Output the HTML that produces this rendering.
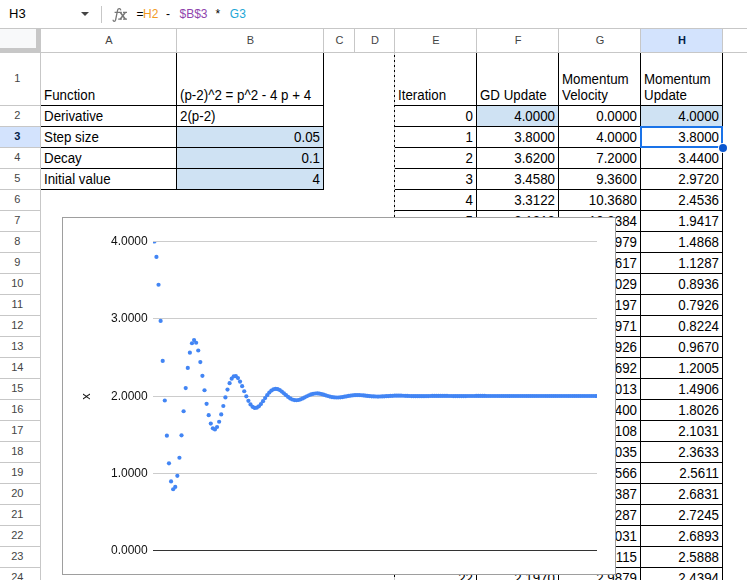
<!DOCTYPE html>
<html><head><meta charset="utf-8"><style>
html,body{margin:0;padding:0;background:#fff;}
body{width:747px;height:580px;position:relative;overflow:hidden;font-family:"Liberation Sans", sans-serif;}
.t{position:absolute;font-size:13.33px;line-height:15px;white-space:nowrap;color:#000;transform:scaleY(1.06);transform-origin:0 12px;}
.hd{position:absolute;font-size:11px;line-height:13px;text-align:center;color:#444;white-space:nowrap;}
</style></head><body>
<div style="position:absolute;left:177px;top:127px;width:146px;height:20px;background:#cfe2f3"></div><div style="position:absolute;left:177px;top:148px;width:146px;height:20px;background:#cfe2f3"></div><div style="position:absolute;left:177px;top:169px;width:146px;height:20px;background:#cfe2f3"></div><div style="position:absolute;left:477px;top:106px;width:81px;height:20px;background:#cfe2f3"></div><div style="position:absolute;left:641px;top:106px;width:81px;height:20px;background:#cfe2f3"></div><div class="t" style="left:44px;top:88px;">Function</div><div class="t" style="left:180px;top:88px;">(p-2)^2 = p^2 - 4 p + 4</div><div class="t" style="left:44px;top:109px;">Derivative</div><div class="t" style="left:180px;top:109px;">2(p-2)</div><div class="t" style="left:44px;top:130px;">Step size</div><div class="t" style="right:427px;top:130px;text-align:right;">0.05</div><div class="t" style="left:44px;top:151px;">Decay</div><div class="t" style="right:427px;top:151px;text-align:right;">0.1</div><div class="t" style="left:44px;top:172px;">Initial value</div><div class="t" style="right:427px;top:172px;text-align:right;">4</div><div class="t" style="left:398px;top:88px;">Iteration</div><div class="t" style="left:480px;top:88px;">GD Update</div><div class="t" style="left:562px;top:72px;">Momentum</div><div class="t" style="left:562px;top:88px;">Velocity</div><div class="t" style="left:644px;top:72px;">Momentum</div><div class="t" style="left:644px;top:88px;">Update</div><div class="t" style="right:274px;top:109px;text-align:right;">0</div><div class="t" style="right:192px;top:109px;text-align:right;">4.0000</div><div class="t" style="right:110px;top:109px;text-align:right;">0.0000</div><div class="t" style="right:28px;top:109px;text-align:right;">4.0000</div><div class="t" style="right:274px;top:130px;text-align:right;">1</div><div class="t" style="right:192px;top:130px;text-align:right;">3.8000</div><div class="t" style="right:110px;top:130px;text-align:right;">4.0000</div><div class="t" style="right:28px;top:130px;text-align:right;">3.8000</div><div class="t" style="right:274px;top:151px;text-align:right;">2</div><div class="t" style="right:192px;top:151px;text-align:right;">3.6200</div><div class="t" style="right:110px;top:151px;text-align:right;">7.2000</div><div class="t" style="right:28px;top:151px;text-align:right;">3.4400</div><div class="t" style="right:274px;top:172px;text-align:right;">3</div><div class="t" style="right:192px;top:172px;text-align:right;">3.4580</div><div class="t" style="right:110px;top:172px;text-align:right;">9.3600</div><div class="t" style="right:28px;top:172px;text-align:right;">2.9720</div><div class="t" style="right:274px;top:193px;text-align:right;">4</div><div class="t" style="right:192px;top:193px;text-align:right;">3.3122</div><div class="t" style="right:110px;top:193px;text-align:right;">10.3680</div><div class="t" style="right:28px;top:193px;text-align:right;">2.4536</div><div class="t" style="right:274px;top:214px;text-align:right;">5</div><div class="t" style="right:192px;top:214px;text-align:right;">3.1810</div><div class="t" style="right:110px;top:214px;text-align:right;">10.2384</div><div class="t" style="right:28px;top:214px;text-align:right;">1.9417</div><div class="t" style="right:274px;top:235px;text-align:right;">6</div><div class="t" style="right:192px;top:235px;text-align:right;">3.0629</div><div class="t" style="right:110px;top:235px;text-align:right;">9.0979</div><div class="t" style="right:28px;top:235px;text-align:right;">1.4868</div><div class="t" style="right:274px;top:256px;text-align:right;">7</div><div class="t" style="right:192px;top:256px;text-align:right;">2.9566</div><div class="t" style="right:110px;top:256px;text-align:right;">7.1617</div><div class="t" style="right:28px;top:256px;text-align:right;">1.1287</div><div class="t" style="right:274px;top:277px;text-align:right;">8</div><div class="t" style="right:192px;top:277px;text-align:right;">2.8609</div><div class="t" style="right:110px;top:277px;text-align:right;">4.7029</div><div class="t" style="right:28px;top:277px;text-align:right;">0.8936</div><div class="t" style="right:274px;top:298px;text-align:right;">9</div><div class="t" style="right:192px;top:298px;text-align:right;">2.7748</div><div class="t" style="right:110px;top:298px;text-align:right;">2.0197</div><div class="t" style="right:28px;top:298px;text-align:right;">0.7926</div><div class="t" style="right:274px;top:319px;text-align:right;">10</div><div class="t" style="right:192px;top:319px;text-align:right;">2.6974</div><div class="t" style="right:110px;top:319px;text-align:right;">-0.5971</div><div class="t" style="right:28px;top:319px;text-align:right;">0.8224</div><div class="t" style="right:274px;top:340px;text-align:right;">11</div><div class="t" style="right:192px;top:340px;text-align:right;">2.6276</div><div class="t" style="right:110px;top:340px;text-align:right;">-2.8926</div><div class="t" style="right:28px;top:340px;text-align:right;">0.9670</div><div class="t" style="right:274px;top:361px;text-align:right;">12</div><div class="t" style="right:192px;top:361px;text-align:right;">2.5649</div><div class="t" style="right:110px;top:361px;text-align:right;">-4.6692</div><div class="t" style="right:28px;top:361px;text-align:right;">1.2005</div><div class="t" style="right:274px;top:382px;text-align:right;">13</div><div class="t" style="right:192px;top:382px;text-align:right;">2.5084</div><div class="t" style="right:110px;top:382px;text-align:right;">-5.8013</div><div class="t" style="right:28px;top:382px;text-align:right;">1.4906</div><div class="t" style="right:274px;top:403px;text-align:right;">14</div><div class="t" style="right:192px;top:403px;text-align:right;">2.4575</div><div class="t" style="right:110px;top:403px;text-align:right;">-6.2400</div><div class="t" style="right:28px;top:403px;text-align:right;">1.8026</div><div class="t" style="right:274px;top:424px;text-align:right;">15</div><div class="t" style="right:192px;top:424px;text-align:right;">2.4118</div><div class="t" style="right:110px;top:424px;text-align:right;">-6.0108</div><div class="t" style="right:28px;top:424px;text-align:right;">2.1031</div><div class="t" style="right:274px;top:445px;text-align:right;">16</div><div class="t" style="right:192px;top:445px;text-align:right;">2.3706</div><div class="t" style="right:110px;top:445px;text-align:right;">-5.2035</div><div class="t" style="right:28px;top:445px;text-align:right;">2.3633</div><div class="t" style="right:274px;top:466px;text-align:right;">17</div><div class="t" style="right:192px;top:466px;text-align:right;">2.3335</div><div class="t" style="right:110px;top:466px;text-align:right;">-3.9566</div><div class="t" style="right:28px;top:466px;text-align:right;">2.5611</div><div class="t" style="right:274px;top:487px;text-align:right;">18</div><div class="t" style="right:192px;top:487px;text-align:right;">2.3002</div><div class="t" style="right:110px;top:487px;text-align:right;">-2.4387</div><div class="t" style="right:28px;top:487px;text-align:right;">2.6831</div><div class="t" style="right:274px;top:508px;text-align:right;">19</div><div class="t" style="right:192px;top:508px;text-align:right;">2.2702</div><div class="t" style="right:110px;top:508px;text-align:right;">-0.8287</div><div class="t" style="right:28px;top:508px;text-align:right;">2.7245</div><div class="t" style="right:274px;top:529px;text-align:right;">20</div><div class="t" style="right:192px;top:529px;text-align:right;">2.2432</div><div class="t" style="right:110px;top:529px;text-align:right;">0.7031</div><div class="t" style="right:28px;top:529px;text-align:right;">2.6893</div><div class="t" style="right:274px;top:550px;text-align:right;">21</div><div class="t" style="right:192px;top:550px;text-align:right;">2.2188</div><div class="t" style="right:110px;top:550px;text-align:right;">2.0115</div><div class="t" style="right:28px;top:550px;text-align:right;">2.5888</div><div class="t" style="right:274px;top:571px;text-align:right;">22</div><div class="t" style="right:192px;top:571px;text-align:right;">2.1970</div><div class="t" style="right:110px;top:571px;text-align:right;">2.9879</div><div class="t" style="right:28px;top:571px;text-align:right;">2.4394</div><div class="t" style="right:274px;top:592px;text-align:right;">23</div><div class="t" style="right:192px;top:592px;text-align:right;">2.1773</div><div class="t" style="right:110px;top:592px;text-align:right;">3.5678</div><div class="t" style="right:28px;top:592px;text-align:right;">2.2610</div><div style="position:absolute;left:41px;top:105px;width:283px;height:1px;background:#000"></div><div style="position:absolute;left:41px;top:126px;width:283px;height:1px;background:#000"></div><div style="position:absolute;left:41px;top:147px;width:283px;height:1px;background:#000"></div><div style="position:absolute;left:41px;top:168px;width:283px;height:1px;background:#000"></div><div style="position:absolute;left:41px;top:189px;width:283px;height:1px;background:#000"></div><div style="position:absolute;left:176px;top:53px;width:1px;height:137px;background:#000"></div><div style="position:absolute;left:323px;top:53px;width:1px;height:137px;background:#000"></div><div style="position:absolute;left:394px;top:105px;width:329px;height:1px;background:#000"></div><div style="position:absolute;left:394px;top:126px;width:329px;height:1px;background:#000"></div><div style="position:absolute;left:394px;top:147px;width:329px;height:1px;background:#000"></div><div style="position:absolute;left:394px;top:168px;width:329px;height:1px;background:#000"></div><div style="position:absolute;left:394px;top:189px;width:329px;height:1px;background:#000"></div><div style="position:absolute;left:394px;top:210px;width:329px;height:1px;background:#000"></div><div style="position:absolute;left:394px;top:231px;width:329px;height:1px;background:#000"></div><div style="position:absolute;left:394px;top:252px;width:329px;height:1px;background:#000"></div><div style="position:absolute;left:394px;top:273px;width:329px;height:1px;background:#000"></div><div style="position:absolute;left:394px;top:294px;width:329px;height:1px;background:#000"></div><div style="position:absolute;left:394px;top:315px;width:329px;height:1px;background:#000"></div><div style="position:absolute;left:394px;top:336px;width:329px;height:1px;background:#000"></div><div style="position:absolute;left:394px;top:357px;width:329px;height:1px;background:#000"></div><div style="position:absolute;left:394px;top:378px;width:329px;height:1px;background:#000"></div><div style="position:absolute;left:394px;top:399px;width:329px;height:1px;background:#000"></div><div style="position:absolute;left:394px;top:420px;width:329px;height:1px;background:#000"></div><div style="position:absolute;left:394px;top:441px;width:329px;height:1px;background:#000"></div><div style="position:absolute;left:394px;top:462px;width:329px;height:1px;background:#000"></div><div style="position:absolute;left:394px;top:483px;width:329px;height:1px;background:#000"></div><div style="position:absolute;left:394px;top:504px;width:329px;height:1px;background:#000"></div><div style="position:absolute;left:394px;top:525px;width:329px;height:1px;background:#000"></div><div style="position:absolute;left:394px;top:546px;width:329px;height:1px;background:#000"></div><div style="position:absolute;left:394px;top:567px;width:329px;height:1px;background:#000"></div><div style="position:absolute;left:394px;top:588px;width:329px;height:1px;background:#000"></div><div style="position:absolute;left:394px;top:609px;width:329px;height:1px;background:#000"></div><div style="position:absolute;left:394px;top:630px;width:329px;height:1px;background:#000"></div><div style="position:absolute;left:394px;top:651px;width:329px;height:1px;background:#000"></div><div style="position:absolute;left:394px;top:672px;width:329px;height:1px;background:#000"></div><div style="position:absolute;left:476px;top:53px;width:1px;height:527px;background:#000"></div><div style="position:absolute;left:558px;top:53px;width:1px;height:527px;background:#000"></div><div style="position:absolute;left:640px;top:53px;width:1px;height:527px;background:#000"></div><div style="position:absolute;left:722px;top:53px;width:1px;height:527px;background:#000"></div><div style="position:absolute;left:394px;top:53px;width:1px;height:527px;background:repeating-linear-gradient(to bottom,#ccc 0,#ccc 2px,#000 2px,#000 4px,#ccc 4px,#ccc 5px)"></div><div style="position:absolute;left:640px;top:126px;width:79px;height:18px;border:2px solid #1a73e8"></div><div style="position:absolute;left:719px;top:144px;width:8px;height:8px;border-radius:50%;background:#0b57d0;box-shadow:0 0 0 1px #fff"></div>
<div style="position:absolute;left:0;top:28px;width:747px;height:1px;background:#c7c7c7"></div><div style="position:absolute;left:0;top:52px;width:747px;height:1px;background:#c7c7c7"></div><div style="position:absolute;left:641px;top:29px;width:81px;height:23px;background:#d3e3fd"></div><div style="position:absolute;left:0;top:29px;width:36px;height:19px;background:#f8f9fa"></div><div style="position:absolute;left:36px;top:29px;width:4px;height:23px;background:#c7c7c7"></div><div style="position:absolute;left:0;top:48px;width:40px;height:4px;background:#c7c7c7"></div><div style="position:absolute;left:40px;top:29px;width:1px;height:23px;background:#c7c7c7"></div><div style="position:absolute;left:176px;top:29px;width:1px;height:23px;background:#c7c7c7"></div><div style="position:absolute;left:323px;top:29px;width:1px;height:23px;background:#c7c7c7"></div><div style="position:absolute;left:354px;top:29px;width:1px;height:23px;background:#c7c7c7"></div><div style="position:absolute;left:394px;top:29px;width:1px;height:23px;background:#c7c7c7"></div><div style="position:absolute;left:476px;top:29px;width:1px;height:23px;background:#c7c7c7"></div><div style="position:absolute;left:558px;top:29px;width:1px;height:23px;background:#c7c7c7"></div><div style="position:absolute;left:640px;top:29px;width:1px;height:23px;background:#c7c7c7"></div><div style="position:absolute;left:722px;top:29px;width:1px;height:23px;background:#c7c7c7"></div><div style="position:absolute;left:40px;top:53px;width:1px;height:527px;background:#c7c7c7"></div><div class="hd" style="left:79.0px;top:34px;width:60px;">A</div><div class="hd" style="left:220.5px;top:34px;width:60px;">B</div><div class="hd" style="left:309.5px;top:34px;width:60px;">C</div><div class="hd" style="left:345.0px;top:34px;width:60px;">D</div><div class="hd" style="left:406.0px;top:34px;width:60px;">E</div><div class="hd" style="left:488.0px;top:34px;width:60px;">F</div><div class="hd" style="left:570.0px;top:34px;width:60px;">G</div><div class="hd" style="left:652.0px;top:34px;width:60px;font-weight:bold;color:#041e49;">H</div><div style="position:absolute;left:0;top:105px;width:40px;height:1px;background:#c7c7c7"></div><div style="position:absolute;left:0;top:126px;width:40px;height:1px;background:#c7c7c7"></div><div style="position:absolute;left:0;top:147px;width:40px;height:1px;background:#c7c7c7"></div><div style="position:absolute;left:0;top:168px;width:40px;height:1px;background:#c7c7c7"></div><div style="position:absolute;left:0;top:189px;width:40px;height:1px;background:#c7c7c7"></div><div style="position:absolute;left:0;top:210px;width:40px;height:1px;background:#c7c7c7"></div><div style="position:absolute;left:0;top:231px;width:40px;height:1px;background:#c7c7c7"></div><div style="position:absolute;left:0;top:252px;width:40px;height:1px;background:#c7c7c7"></div><div style="position:absolute;left:0;top:273px;width:40px;height:1px;background:#c7c7c7"></div><div style="position:absolute;left:0;top:294px;width:40px;height:1px;background:#c7c7c7"></div><div style="position:absolute;left:0;top:315px;width:40px;height:1px;background:#c7c7c7"></div><div style="position:absolute;left:0;top:336px;width:40px;height:1px;background:#c7c7c7"></div><div style="position:absolute;left:0;top:357px;width:40px;height:1px;background:#c7c7c7"></div><div style="position:absolute;left:0;top:378px;width:40px;height:1px;background:#c7c7c7"></div><div style="position:absolute;left:0;top:399px;width:40px;height:1px;background:#c7c7c7"></div><div style="position:absolute;left:0;top:420px;width:40px;height:1px;background:#c7c7c7"></div><div style="position:absolute;left:0;top:441px;width:40px;height:1px;background:#c7c7c7"></div><div style="position:absolute;left:0;top:462px;width:40px;height:1px;background:#c7c7c7"></div><div style="position:absolute;left:0;top:483px;width:40px;height:1px;background:#c7c7c7"></div><div style="position:absolute;left:0;top:504px;width:40px;height:1px;background:#c7c7c7"></div><div style="position:absolute;left:0;top:525px;width:40px;height:1px;background:#c7c7c7"></div><div style="position:absolute;left:0;top:546px;width:40px;height:1px;background:#c7c7c7"></div><div style="position:absolute;left:0;top:567px;width:40px;height:1px;background:#c7c7c7"></div><div style="position:absolute;left:0;top:588px;width:40px;height:1px;background:#c7c7c7"></div><div style="position:absolute;left:0;top:609px;width:40px;height:1px;background:#c7c7c7"></div><div class="hd" style="left:-2.7px;top:72.0px;width:40px;">1</div><div class="hd" style="left:-2.7px;top:109.0px;width:40px;">2</div><div style="position:absolute;left:0;top:127px;width:40px;height:20px;background:#d3e3fd"></div><div class="hd" style="left:-2.7px;top:130.0px;width:40px;font-weight:bold;color:#041e49;">3</div><div class="hd" style="left:-2.7px;top:151.0px;width:40px;">4</div><div class="hd" style="left:-2.7px;top:172.0px;width:40px;">5</div><div class="hd" style="left:-2.7px;top:193.0px;width:40px;">6</div><div class="hd" style="left:-2.7px;top:214.0px;width:40px;">7</div><div class="hd" style="left:-2.7px;top:235.0px;width:40px;">8</div><div class="hd" style="left:-2.7px;top:256.0px;width:40px;">9</div><div class="hd" style="left:-2.7px;top:277.0px;width:40px;">10</div><div class="hd" style="left:-2.7px;top:298.0px;width:40px;">11</div><div class="hd" style="left:-2.7px;top:319.0px;width:40px;">12</div><div class="hd" style="left:-2.7px;top:340.0px;width:40px;">13</div><div class="hd" style="left:-2.7px;top:361.0px;width:40px;">14</div><div class="hd" style="left:-2.7px;top:382.0px;width:40px;">15</div><div class="hd" style="left:-2.7px;top:403.0px;width:40px;">16</div><div class="hd" style="left:-2.7px;top:424.0px;width:40px;">17</div><div class="hd" style="left:-2.7px;top:445.0px;width:40px;">18</div><div class="hd" style="left:-2.7px;top:466.0px;width:40px;">19</div><div class="hd" style="left:-2.7px;top:487.0px;width:40px;">20</div><div class="hd" style="left:-2.7px;top:508.0px;width:40px;">21</div><div class="hd" style="left:-2.7px;top:529.0px;width:40px;">22</div><div class="hd" style="left:-2.7px;top:550.0px;width:40px;">23</div><div class="hd" style="left:-2.7px;top:571.0px;width:40px;">24</div><div class="hd" style="left:-2.7px;top:592.0px;width:40px;">25</div>
<div class="t" style="left:9px;top:6px;font-size:13px;transform:none">H3</div><div style="position:absolute;left:81px;top:12px;width:0;height:0;border-left:4px solid transparent;border-right:4px solid transparent;border-top:4px solid #444"></div><div style="position:absolute;left:101px;top:6px;width:1px;height:17px;background:#c7c7c7"></div><svg width="747" height="28" style="position:absolute;left:0;top:0"><g fill="none" stroke="#777" stroke-width="1.3" stroke-linecap="butt"><path d="M120.6 10.4 C120.9 8.4 118.1 8.0 117.6 10.2 L115.6 19.8 C115.2 21.8 113.0 21.8 113.1 19.8"/><path d="M114.6 12.45 H121.8 M123 12.45 H127 M118.2 19.2 H121.8 M123 19.2 H127"/><path d="M120.4 12.45 L125.4 19.2 M125.2 12.45 L120.2 19.2" stroke-width="1.5"/></g></svg><div class="t" style="left:136.5px;top:7px;font-size:12px;color:#000">=</div><div class="t" style="left:143px;top:7px;font-size:12px;color:#f29a1f">H2</div><div class="t" style="left:166px;top:7px;font-size:12px;color:#000">-</div><div class="t" style="left:179.5px;top:7px;font-size:12px;color:#8e44ad">$B$3</div><div class="t" style="left:215.5px;top:7px;font-size:12px;color:#000">*</div><div class="t" style="left:229.8px;top:7px;font-size:12px;color:#1ea7d6">G3</div>
<svg width="747" height="580" style="position:absolute;left:0;top:0;will-change:transform"><rect x="62.5" y="217.5" width="553" height="357" fill="#fff" stroke="#9e9e9e" stroke-width="1"/><defs><clipPath id="cp"><rect x="153" y="242" width="444" height="309"/></clipPath></defs><line x1="153" x2="597" y1="241.50" y2="241.50" stroke="#cccccc" stroke-width="1"/><line x1="153" x2="597" y1="318.50" y2="318.50" stroke="#cccccc" stroke-width="1"/><line x1="153" x2="597" y1="396.50" y2="396.50" stroke="#cccccc" stroke-width="1"/><line x1="153" x2="597" y1="473.50" y2="473.50" stroke="#cccccc" stroke-width="1"/><line x1="153" x2="597" y1="550.50" y2="550.50" stroke="#333" stroke-width="1"/><g font-family="Liberation Sans, sans-serif" font-size="12" fill="#111"><text x="147.7" y="245.30" text-anchor="end">4.0000</text><text x="147.7" y="322.30" text-anchor="end">3.0000</text><text x="147.7" y="400.30" text-anchor="end">2.0000</text><text x="147.7" y="477.30" text-anchor="end">1.0000</text><text x="147.7" y="554.30" text-anchor="end">0.0000</text><text x="0" y="0" font-size="13" transform="translate(90.3 396.5) rotate(-90)" text-anchor="middle">x</text></g><g clip-path="url(#cp)" fill="#4285f4"><circle cx="154.35" cy="241.50" r="2.1"/><circle cx="156.44" cy="256.95" r="2.1"/><circle cx="158.53" cy="284.76" r="2.1"/><circle cx="160.62" cy="320.91" r="2.1"/><circle cx="162.71" cy="360.96" r="2.1"/><circle cx="164.80" cy="400.51" r="2.1"/><circle cx="166.89" cy="435.65" r="2.1"/><circle cx="168.98" cy="463.31" r="2.1"/><circle cx="171.07" cy="481.47" r="2.1"/><circle cx="173.16" cy="489.27" r="2.1"/><circle cx="175.25" cy="486.97" r="2.1"/><circle cx="177.34" cy="475.80" r="2.1"/><circle cx="179.43" cy="457.76" r="2.1"/><circle cx="181.52" cy="435.35" r="2.1"/><circle cx="183.61" cy="411.25" r="2.1"/><circle cx="185.70" cy="388.03" r="2.1"/><circle cx="187.79" cy="367.94" r="2.1"/><circle cx="189.88" cy="352.65" r="2.1"/><circle cx="191.97" cy="343.23" r="2.1"/><circle cx="194.06" cy="340.03" r="2.1"/><circle cx="196.15" cy="342.75" r="2.1"/><circle cx="198.24" cy="350.52" r="2.1"/><circle cx="200.33" cy="362.06" r="2.1"/><circle cx="202.42" cy="375.84" r="2.1"/><circle cx="204.51" cy="390.26" r="2.1"/><circle cx="206.60" cy="403.81" r="2.1"/><circle cx="208.69" cy="415.22" r="2.1"/><circle cx="210.78" cy="423.58" r="2.1"/><circle cx="212.87" cy="428.33" r="2.1"/><circle cx="214.96" cy="429.38" r="2.1"/><circle cx="217.05" cy="426.99" r="2.1"/><circle cx="219.14" cy="421.74" r="2.1"/><circle cx="221.23" cy="414.43" r="2.1"/><circle cx="223.32" cy="406.02" r="2.1"/><circle cx="225.41" cy="397.44" r="2.1"/><circle cx="227.50" cy="389.58" r="2.1"/><circle cx="229.59" cy="383.15" r="2.1"/><circle cx="231.68" cy="378.64" r="2.1"/><circle cx="233.77" cy="376.32" r="2.1"/><circle cx="235.86" cy="376.20" r="2.1"/><circle cx="237.95" cy="378.08" r="2.1"/><circle cx="240.04" cy="381.55" r="2.1"/><circle cx="242.13" cy="386.13" r="2.1"/><circle cx="244.22" cy="391.23" r="2.1"/><circle cx="246.31" cy="396.30" r="2.1"/><circle cx="248.40" cy="400.84" r="2.1"/><circle cx="250.49" cy="404.43" r="2.1"/><circle cx="252.58" cy="406.83" r="2.1"/><circle cx="254.67" cy="407.90" r="2.1"/><circle cx="256.76" cy="407.67" r="2.1"/><circle cx="258.85" cy="406.30" r="2.1"/><circle cx="260.94" cy="404.04" r="2.1"/><circle cx="263.03" cy="401.20" r="2.1"/><circle cx="265.12" cy="398.12" r="2.1"/><circle cx="267.21" cy="395.14" r="2.1"/><circle cx="269.30" cy="392.54" r="2.1"/><circle cx="271.39" cy="390.55" r="2.1"/><circle cx="273.48" cy="389.30" r="2.1"/><circle cx="275.57" cy="388.85" r="2.1"/><circle cx="277.66" cy="389.16" r="2.1"/><circle cx="279.75" cy="390.12" r="2.1"/><circle cx="281.84" cy="391.57" r="2.1"/><circle cx="283.93" cy="393.32" r="2.1"/><circle cx="286.02" cy="395.16" r="2.1"/><circle cx="288.11" cy="396.91" r="2.1"/><circle cx="290.20" cy="398.38" r="2.1"/><circle cx="292.29" cy="399.48" r="2.1"/><circle cx="294.38" cy="400.11" r="2.1"/><circle cx="296.47" cy="400.27" r="2.1"/><circle cx="298.56" cy="399.99" r="2.1"/><circle cx="300.65" cy="399.33" r="2.1"/><circle cx="302.74" cy="398.41" r="2.1"/><circle cx="304.83" cy="397.34" r="2.1"/><circle cx="306.92" cy="396.24" r="2.1"/><circle cx="309.01" cy="395.23" r="2.1"/><circle cx="311.10" cy="394.40" r="2.1"/><circle cx="313.19" cy="393.81" r="2.1"/><circle cx="315.28" cy="393.49" r="2.1"/><circle cx="317.37" cy="393.46" r="2.1"/><circle cx="319.46" cy="393.69" r="2.1"/><circle cx="321.55" cy="394.12" r="2.1"/><circle cx="323.64" cy="394.70" r="2.1"/><circle cx="325.73" cy="395.35" r="2.1"/><circle cx="327.82" cy="396.00" r="2.1"/><circle cx="329.91" cy="396.59" r="2.1"/><circle cx="332.00" cy="397.06" r="2.1"/><circle cx="334.09" cy="397.37" r="2.1"/><circle cx="336.18" cy="397.52" r="2.1"/><circle cx="338.27" cy="397.50" r="2.1"/><circle cx="340.36" cy="397.33" r="2.1"/><circle cx="342.45" cy="397.05" r="2.1"/><circle cx="344.54" cy="396.69" r="2.1"/><circle cx="346.63" cy="396.29" r="2.1"/><circle cx="348.72" cy="395.91" r="2.1"/><circle cx="350.81" cy="395.58" r="2.1"/><circle cx="352.90" cy="395.32" r="2.1"/><circle cx="354.99" cy="395.15" r="2.1"/><circle cx="357.08" cy="395.09" r="2.1"/><circle cx="359.17" cy="395.12" r="2.1"/><circle cx="361.26" cy="395.24" r="2.1"/><circle cx="363.35" cy="395.42" r="2.1"/><circle cx="365.44" cy="395.64" r="2.1"/><circle cx="367.53" cy="395.88" r="2.1"/><circle cx="369.62" cy="396.10" r="2.1"/><circle cx="371.71" cy="396.30" r="2.1"/><circle cx="373.80" cy="396.44" r="2.1"/><circle cx="375.89" cy="396.52" r="2.1"/><circle cx="377.98" cy="396.55" r="2.1"/><circle cx="380.07" cy="396.51" r="2.1"/><circle cx="382.16" cy="396.43" r="2.1"/><circle cx="384.25" cy="396.32" r="2.1"/><circle cx="386.34" cy="396.18" r="2.1"/><circle cx="388.43" cy="396.04" r="2.1"/><circle cx="390.52" cy="395.91" r="2.1"/><circle cx="392.61" cy="395.80" r="2.1"/><circle cx="394.70" cy="395.72" r="2.1"/><circle cx="396.79" cy="395.68" r="2.1"/><circle cx="398.88" cy="395.68" r="2.1"/><circle cx="400.97" cy="395.70" r="2.1"/><circle cx="403.06" cy="395.76" r="2.1"/><circle cx="405.15" cy="395.83" r="2.1"/><circle cx="407.24" cy="395.91" r="2.1"/><circle cx="409.33" cy="396.00" r="2.1"/><circle cx="411.42" cy="396.07" r="2.1"/><circle cx="413.51" cy="396.13" r="2.1"/><circle cx="415.60" cy="396.17" r="2.1"/><circle cx="417.69" cy="396.19" r="2.1"/><circle cx="419.78" cy="396.19" r="2.1"/><circle cx="421.87" cy="396.17" r="2.1"/><circle cx="423.96" cy="396.14" r="2.1"/><circle cx="426.05" cy="396.09" r="2.1"/><circle cx="428.14" cy="396.04" r="2.1"/><circle cx="430.23" cy="395.99" r="2.1"/><circle cx="432.32" cy="395.95" r="2.1"/><circle cx="434.41" cy="395.91" r="2.1"/><circle cx="436.50" cy="395.89" r="2.1"/><circle cx="438.59" cy="395.88" r="2.1"/><circle cx="440.68" cy="395.89" r="2.1"/><circle cx="442.77" cy="395.90" r="2.1"/><circle cx="444.86" cy="395.92" r="2.1"/><circle cx="446.95" cy="395.95" r="2.1"/><circle cx="449.04" cy="395.98" r="2.1"/><circle cx="451.13" cy="396.01" r="2.1"/><circle cx="453.22" cy="396.04" r="2.1"/><circle cx="455.31" cy="396.06" r="2.1"/><circle cx="457.40" cy="396.07" r="2.1"/><circle cx="459.49" cy="396.07" r="2.1"/><circle cx="461.58" cy="396.07" r="2.1"/><circle cx="463.67" cy="396.06" r="2.1"/><circle cx="465.76" cy="396.04" r="2.1"/><circle cx="467.85" cy="396.02" r="2.1"/><circle cx="469.94" cy="396.01" r="2.1"/><circle cx="472.03" cy="395.99" r="2.1"/><circle cx="474.12" cy="395.98" r="2.1"/><circle cx="476.21" cy="395.97" r="2.1"/><circle cx="478.30" cy="395.96" r="2.1"/><circle cx="480.39" cy="395.96" r="2.1"/><circle cx="482.48" cy="395.96" r="2.1"/><circle cx="484.57" cy="395.97" r="2.1"/><circle cx="486.66" cy="395.98" r="2.1"/><circle cx="488.75" cy="395.99" r="2.1"/><circle cx="490.84" cy="396.00" r="2.1"/><circle cx="492.93" cy="396.01" r="2.1"/><circle cx="495.02" cy="396.02" r="2.1"/><circle cx="497.11" cy="396.02" r="2.1"/><circle cx="499.20" cy="396.02" r="2.1"/><circle cx="501.29" cy="396.02" r="2.1"/><circle cx="503.38" cy="396.02" r="2.1"/><circle cx="505.47" cy="396.02" r="2.1"/><circle cx="507.56" cy="396.01" r="2.1"/><circle cx="509.65" cy="396.01" r="2.1"/><circle cx="511.74" cy="396.00" r="2.1"/><circle cx="513.83" cy="395.99" r="2.1"/><circle cx="515.92" cy="395.99" r="2.1"/><circle cx="518.01" cy="395.99" r="2.1"/><circle cx="520.10" cy="395.99" r="2.1"/><circle cx="522.19" cy="395.99" r="2.1"/><circle cx="524.28" cy="395.99" r="2.1"/><circle cx="526.37" cy="395.99" r="2.1"/><circle cx="528.46" cy="395.99" r="2.1"/><circle cx="530.55" cy="396.00" r="2.1"/><circle cx="532.64" cy="396.00" r="2.1"/><circle cx="534.73" cy="396.00" r="2.1"/><circle cx="536.82" cy="396.01" r="2.1"/><circle cx="538.91" cy="396.01" r="2.1"/><circle cx="541.00" cy="396.01" r="2.1"/><circle cx="543.09" cy="396.01" r="2.1"/><circle cx="545.18" cy="396.01" r="2.1"/><circle cx="547.27" cy="396.01" r="2.1"/><circle cx="549.36" cy="396.00" r="2.1"/><circle cx="551.45" cy="396.00" r="2.1"/><circle cx="553.54" cy="396.00" r="2.1"/><circle cx="555.63" cy="396.00" r="2.1"/><circle cx="557.72" cy="396.00" r="2.1"/><circle cx="559.81" cy="395.99" r="2.1"/><circle cx="561.90" cy="395.99" r="2.1"/><circle cx="563.99" cy="396.00" r="2.1"/><circle cx="566.08" cy="396.00" r="2.1"/><circle cx="568.17" cy="396.00" r="2.1"/><circle cx="570.26" cy="396.00" r="2.1"/><circle cx="572.35" cy="396.00" r="2.1"/><circle cx="574.44" cy="396.00" r="2.1"/><circle cx="576.53" cy="396.00" r="2.1"/><circle cx="578.62" cy="396.00" r="2.1"/><circle cx="580.71" cy="396.00" r="2.1"/><circle cx="582.80" cy="396.00" r="2.1"/><circle cx="584.89" cy="396.00" r="2.1"/><circle cx="586.98" cy="396.00" r="2.1"/><circle cx="589.07" cy="396.00" r="2.1"/><circle cx="591.16" cy="396.00" r="2.1"/><circle cx="593.25" cy="396.00" r="2.1"/><circle cx="595.34" cy="396.00" r="2.1"/><circle cx="597.43" cy="396.00" r="2.1"/><circle cx="599.52" cy="396.00" r="2.1"/></g></svg>
</body></html>
